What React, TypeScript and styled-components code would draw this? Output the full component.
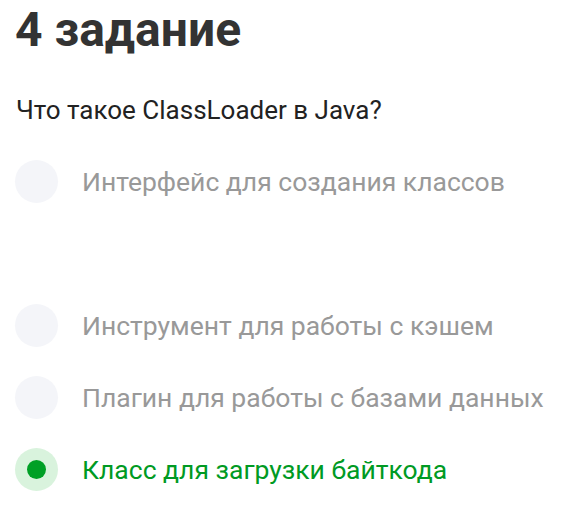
import styled, { createGlobalStyle } from 'styled-components';

const GlobalStyle = createGlobalStyle`
    html, body {
        margin: 0;
        padding: 0;
        background: #fff;
    }

    body {
        font-family: Roboto, "Noto Sans", sans-serif;
    }
`;

const Page = styled.div`
    padding: 0 16px 0 15px;
`;

const Title = styled.h1`
    margin: 0;
    font-size: 48px;
    font-weight: 700;
    line-height: 60px;
    color: #333333;
`;

const Question = styled.p`
    margin: 34px 0 0 1px;
    font-size: 26px;
    line-height: 32px;
    color: #222222;
`;

const Options = styled.ul`
    list-style: none;
    margin: 34px 0 0;
    padding: 0;
    display: flex;
    flex-direction: column;
    gap: 29px;
`;

const Option = styled.li<{ $spaced?: boolean }>`
    display: flex;
    align-items: center;
    gap: 24px;
    margin-top: ${(p) => (p.$spaced ? '72px' : '0')};
`;

const Radio = styled.span<{ $checked?: boolean }>`
    flex: none;
    width: 43px;
    height: 43px;
    border-radius: 50%;
    background: ${(p) => (p.$checked ? '#d9f3dd' : '#f4f5f9')};
    display: flex;
    align-items: center;
    justify-content: center;

    &::after {
        content: '';
        display: ${(p) => (p.$checked ? 'block' : 'none')};
        width: 19px;
        height: 19px;
        border-radius: 50%;
        background: #00a026;
    }
`;

const Label = styled.span<{ $checked?: boolean }>`
    font-size: 26.5px;
    line-height: 43px;
    white-space: nowrap;
    color: ${(p) => (p.$checked ? '#009a23' : '#999999')};
`;

const answers = [
    { text: 'Интерфейс для создания классов', checked: false },
    { text: 'Инструмент для работы с кэшем', checked: false, spaced: true },
    { text: 'Плагин для работы с базами данных', checked: false },
    { text: 'Класс для загрузки байткода', checked: true },
];

function App() {
    return (
        <>
            <GlobalStyle />
            <Page>
                <Title>4 задание</Title>
                <Question>Что такое ClassLoader в Java?</Question>
                <Options>
                    {answers.map((answer) => (
                        <Option key={answer.text} $spaced={answer.spaced}>
                            <Radio $checked={answer.checked} />
                            <Label $checked={answer.checked}>{answer.text}</Label>
                        </Option>
                    ))}
                </Options>
            </Page>
        </>
    );
}

export default App;
